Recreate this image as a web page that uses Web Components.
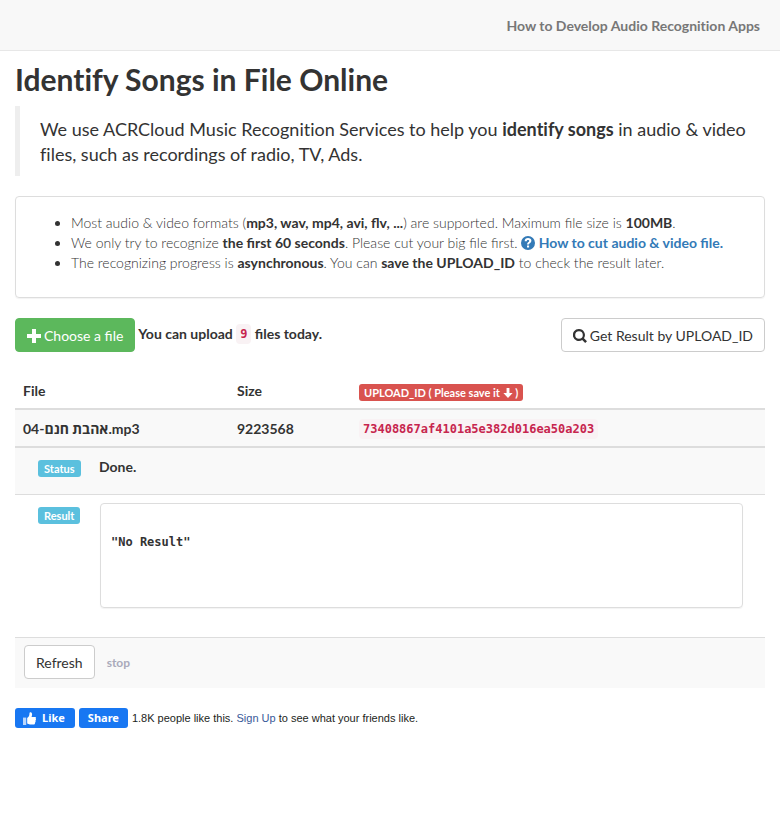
<!DOCTYPE html>
<html lang="en">
<head>
<meta charset="utf-8">
<meta name="viewport" content="width=device-width, initial-scale=1">
<title>Identify Songs in File Online</title>
<style>
	body {
		margin: 0;
		background: #fff;
		color: #333;
		font: 14px/20px Lato, "Open Sans", "Liberation Sans", sans-serif;
	}
	main {
		padding: 0 15px;
	}
	h1 {
		margin: 12px 0 10px;
		font-size: 30px;
		line-height: 33px;
		font-weight: 700;
		font-variant-ligatures: none;
	}
	blockquote {
		margin: 0 0 20px;
		padding: 11px 0 9px 20px;
		border-left: 5px solid #eee;
		font-size: 18px;
		line-height: 25px;
		font-variant-ligatures: none;
	}
</style>
</head>
<body>
<site-nav><a href="#docs">How to Develop Audio Recognition Apps</a></site-nav>
<main>
	<h1>Identify Songs in File Online</h1>
	<blockquote>We use ACRCloud Music Recognition Services to help you <b>identify songs</b> in audio &amp; video files, such as recordings of radio, TV, Ads.</blockquote>
	<info-panel></info-panel>
	<upload-toolbar remaining="9"></upload-toolbar>
	<upload-result name="04-אהבת חנם.mp3" size="9223568" upload-id="73408867af4101a5e382d016ea50a203" status="Done." result='"No Result"'></upload-result>
	<like-bar></like-bar>
</main>
<script>
'use strict'

const icons = {
	plus: '<path d="M5 0h4v5h5v4H9v5H5V9H0V5h5z"/>',
	search: '<path fill-rule="evenodd" d="M6 0a6 6 0 0 1 5 9.200l3 3L12.200 14 9.200 11A6 6 0 1 1 6 0zm0 2.200a3.800 3.800 0 1 0 0 7.600 3.800 3.800 0 0 0 0-7.600z"/>',
	question: '<path fill-rule="evenodd" d="M7 0a7 7 0 1 1 0 14A7 7 0 0 1 7 0zM3.700 5.200h2.100c0-.8.4-1.200 1.200-1.200s1.200.4 1.200 1c0 1.200-2.200 1.200-2.200 3.500h2c0-1.400 2.400-1.500 2.400-3.700C10.400 3 9 2 7 2 4.900 2 3.700 3.200 3.700 5.200zM6 9.500v2h2.100v-2z"/>',
	down: '<path d="M5 0h4v7h4.500L7 14 .5 7H5z"/>',
	thumb: '<path opacity=".7" d="M0 6h3.500v8H0z"/><path d="M4.500 6.500C6.500 5 7 3.500 7 1c0-1.300 2.800-1.200 2.800 1.500 0 1.100-.3 2-.6 2.800H13c1.200 0 1.400 1.500.5 2 .8.6.6 1.700-.2 2 .6.7.3 1.700-.4 2 .3 1-.2 2.200-1.400 2.200H7.500c-1.300 0-2-.7-3-1z"/>'
}

class UiIcon extends HTMLElement {
	constructor() {
		super()
		this.attachShadow({ mode: 'open' })
	}

	connectedCallback() {
		this.shadowRoot.innerHTML = `
			<style>
				:host { display: inline-block; width: 14px; height: 14px; vertical-align: -2px; }
				svg { display: block; width: 100%; height: 100%; fill: currentColor; }
			</style>
			<svg viewBox="0 0 14 14" aria-hidden="true">${icons[this.getAttribute('name')]}</svg>`
	}
}
customElements.define('ui-icon', UiIcon)

class UiButton extends HTMLElement {
	constructor() {
		super()
		this.attachShadow({ mode: 'open' }).innerHTML = `
			<style>
				:host { display: inline-block; }
				button {
					display: flex;
					align-items: center;
					gap: 3px;
					box-sizing: border-box;
					height: 34px;
					padding: 7px 11px 5px;
					border: 1px solid #ccc;
					border-radius: 4px;
					background: #fff;
					color: #333;
					font: 400 14px/20px Lato, "Liberation Sans", sans-serif;
					white-space: nowrap;
					cursor: pointer;
				}
				:host([kind=success]) button {
					border-color: #5cb85c;
					background: #5cb85c;
					color: #fff;
				}
			</style>
			<button type="button"><slot></slot></button>`
	}
}
customElements.define('ui-button', UiButton)

class UiLabel extends HTMLElement {
	constructor() {
		super()
		this.attachShadow({ mode: 'open' }).innerHTML = `
			<style>
				:host {
					display: inline-block;
					padding: 0 6px;
					border-radius: 3px;
					background: #5bc0de;
					color: #fff;
					font-size: 11px;
					font-weight: 700;
					line-height: 17px;
					white-space: nowrap;
					vertical-align: middle;
				}
				:host([kind=danger]) { padding: 0 5px; background: #d9534f; }
			</style>
			<slot></slot>`
	}
}
customElements.define('ui-label', UiLabel)

class UiCode extends HTMLElement {
	constructor() {
		super()
		this.attachShadow({ mode: 'open' }).innerHTML = `
			<style>
				:host { display: inline-block; vertical-align: top; }
				code {
					display: block;
					padding: 1px 4px 0;
					border-radius: 4px;
					background: #f9f2f4;
					color: #c7254e;
					font: 700 12px/19px "DejaVu Sans Mono", monospace;
				}
			</style>
			<code><slot></slot></code>`
	}
}
customElements.define('ui-code', UiCode)

class SiteNav extends HTMLElement {
	constructor() {
		super()
		this.attachShadow({ mode: 'open' }).innerHTML = `
			<style>
				:host { display: block; }
				nav {
					display: flex;
					justify-content: flex-end;
					padding: 16px 20px 14px;
					border-bottom: 1px solid #e7e7e7;
					background: #f8f8f8;
				}
				::slotted(a) {
					color: #777;
					font-weight: 700;
					font-variant-ligatures: none;
					text-decoration: none;
				}
			</style>
			<nav><slot></slot></nav>`
	}
}
customElements.define('site-nav', SiteNav)

class InfoPanel extends HTMLElement {
	constructor() {
		super()
		this.attachShadow({ mode: 'open' }).innerHTML = `
			<style>
				:host {
					display: block;
					margin-bottom: 20px;
					padding: 16px 15px 14px;
					border: 1px solid #ddd;
					border-radius: 4px;
					box-shadow: 0 1px 1px rgb(0 0 0 / 5%);
				}
				ul {
					margin: 0 0 10px;
					padding-left: 40px;
					font-weight: 300;
				}
				b, a { font-weight: 700; }
				a { color: #337ab7; text-decoration: none; }
			</style>
			<ul>
				<li>Most audio &amp; video formats (<b>mp3, wav, mp4, avi, flv, ...</b>) are supported. Maximum file size is <b>100MB</b>.</li>
				<li>We only try to recognize <b>the first 60 seconds</b>. Please cut your big file first. <a href="#cut"><ui-icon name="question"></ui-icon> How to cut audio &amp; video file.</a></li>
				<li>The recognizing progress is <b>asynchronous</b>. You can <b>save the UPLOAD_ID</b> to check the result later.</li>
			</ul>`
	}
}
customElements.define('info-panel', InfoPanel)

class UploadToolbar extends HTMLElement {
	constructor() {
		super()
		this.attachShadow({ mode: 'open' })
	}

	connectedCallback() {
		this.shadowRoot.innerHTML = `
			<style>
				:host {
					display: flex;
					flex-wrap: wrap;
					align-items: center;
					gap: 3px;
					margin-bottom: 20px;
				}
				.quota { flex: 1; font-weight: 700; padding-bottom: 2px; }
			</style>
			<ui-button kind="success"><ui-icon name="plus"></ui-icon> Choose a file</ui-button>
			<span class="quota">You can upload <ui-code>${this.getAttribute('remaining')}</ui-code> files today.</span>
			<ui-button><ui-icon name="search"></ui-icon> Get Result by UPLOAD_ID</ui-button>`
	}
}
customElements.define('upload-toolbar', UploadToolbar)

class UploadResult extends HTMLElement {
	constructor() {
		super()
		this.attachShadow({ mode: 'open' })
	}

	connectedCallback() {
		this.shadowRoot.innerHTML = `
			<style>
				:host { display: block; margin-bottom: 20px; font-weight: 700; }
				table {
					width: 100%;
					border-spacing: 0;
					table-layout: fixed;
				}
				th, td {
					padding: 9px 8px 7px;
					text-align: left;
					vertical-align: top;
				}
				.file td, .file th { height: 20px; border-bottom: 2px solid #ddd; }
				.file td, .odd { background: #f9f9f9; }
				.name { width: 198px; }
				.size { width: 106px; }
				.details tr + tr > * { border-top: 1px solid #ddd; }
				.details th { width: 61px; padding: 9px 0 0 23px; }
				.details td { padding: 9px 22px 17px 0; }
				.details .output { padding: 8px 22px 29px 1px; }
				.details .actions { padding: 7px 9px 9px; }
				pre {
					min-height: 47px;
					margin: 0;
					padding: 28px 10px;
					border: 1px solid #ddd;
					border-radius: 4px;
					box-shadow: 0 1px 1px rgb(0 0 0 / 5%);
					font: 700 12px/20px "DejaVu Sans Mono", monospace;
					white-space: pre-wrap;
				}
				.row { display: flex; align-items: center; gap: 12px; }
				.stop {
					padding: 0;
					border: 0;
					background: none;
					color: #aab;
					font: 700 12px/17px Lato, sans-serif;
				}
				ui-label ui-icon { width: 10px; height: 10px; vertical-align: -1px; }
			</style>
			<table class="file">
				<thead>
					<tr>
						<th class="name">File</th>
						<th class="size">Size</th>
						<th><ui-label kind="danger">UPLOAD_ID ( Please save it <ui-icon name="down"></ui-icon> )</ui-label></th>
					</tr>
				</thead>
				<tbody>
					<tr>
						<td>${this.getAttribute('name')}</td>
						<td>${this.getAttribute('size')}</td>
						<td><ui-code>${this.getAttribute('upload-id')}</ui-code></td>
					</tr>
				</tbody>
			</table>
			<table class="details">
				<tr class="odd">
					<th scope="row"><ui-label>Status</ui-label></th>
					<td>${this.getAttribute('status')}</td>
				</tr>
				<tr>
					<th scope="row"><ui-label>Result</ui-label></th>
					<td class="output"><pre>${this.getAttribute('result')}</pre></td>
				</tr>
				<tr class="odd">
					<td class="actions" colspan="2">
						<div class="row">
							<ui-button>Refresh</ui-button>
							<button class="stop" type="button">stop</button>
						</div>
					</td>
				</tr>
			</table>`
	}
}
customElements.define('upload-result', UploadResult)

class LikeBar extends HTMLElement {
	constructor() {
		super()
		this.attachShadow({ mode: 'open' }).innerHTML = `
			<style>
				:host {
					display: flex;
					flex-wrap: wrap;
					align-items: center;
					gap: 4px;
					color: #1c1e21;
					font: 11px/20px "Liberation Sans", sans-serif;
				}
				button {
					display: flex;
					align-items: center;
					gap: 5px;
					height: 20px;
					padding: 0 9px;
					border: 0;
					border-radius: 3px;
					background: #1877f2;
					color: #fff;
					font: 700 11px/20px "Noto Sans", "Liberation Sans", sans-serif;
				}
				.like { padding: 0 10px 0 8px; }
				ui-icon { width: 13px; height: 13px; margin-right: 1px; }
				a { color: #385898; text-decoration: none; }
			</style>
			<button class="like" type="button"><ui-icon name="thumb"></ui-icon>Like</button>
			<button type="button">Share</button>
			<span>1.8K people like this. <a href="#signup">Sign Up</a> to see what your friends like.</span>`
	}
}
customElements.define('like-bar', LikeBar)
</script>
</body>
</html>
